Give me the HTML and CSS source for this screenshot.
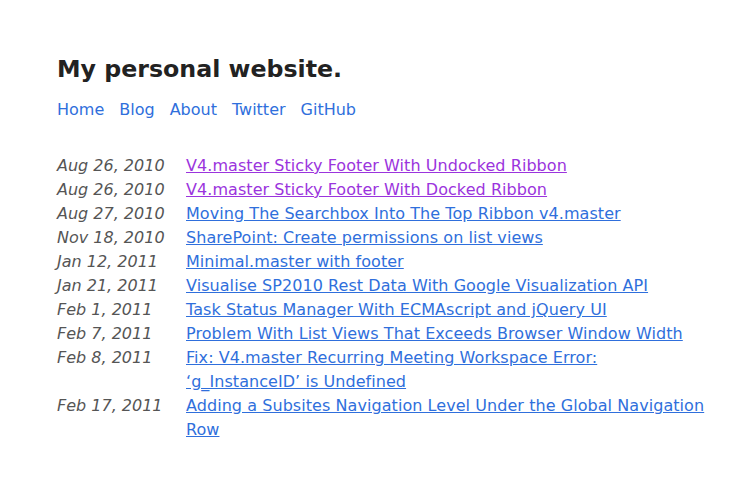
FILE: index.html
```html
<!DOCTYPE html>
<html lang="en">
<head>
<meta charset="utf-8">
<title>My personal website.</title>
<link rel="stylesheet" href="styles.css">
</head>
<body>
<div class="page">
  <header class="header">
    <h1 class="title">My personal website.</h1>
    <nav class="nav">
      <a href="#">Home</a>
      <a href="#">Blog</a>
      <a href="#">About</a>
      <a href="#">Twitter</a>
      <a href="#">GitHub</a>
    </nav>
  </header>
  <ul class="posts">
    <li class="post"><span class="date">Aug 26, 2010</span><a class="link visited" href="#">V4.master Sticky Footer With Undocked Ribbon</a></li>
    <li class="post"><span class="date">Aug 26, 2010</span><a class="link visited" href="#">V4.master Sticky Footer With Docked Ribbon</a></li>
    <li class="post"><span class="date">Aug 27, 2010</span><a class="link" href="#">Moving The Searchbox Into The Top Ribbon v4.master</a></li>
    <li class="post"><span class="date">Nov 18, 2010</span><a class="link" href="#">SharePoint: Create permissions on list views</a></li>
    <li class="post"><span class="date">Jan 12, 2011</span><a class="link" href="#">Minimal.master with footer</a></li>
    <li class="post"><span class="date">Jan 21, 2011</span><a class="link" href="#">Visualise SP2010 Rest Data With Google Visualization API</a></li>
    <li class="post"><span class="date">Feb 1, 2011</span><a class="link" href="#">Task Status Manager With ECMAscript and jQuery UI</a></li>
    <li class="post"><span class="date">Feb 7, 2011</span><a class="link" href="#">Problem With List Views That Exceeds Browser Window Width</a></li>
    <li class="post"><span class="date">Feb 8, 2011</span><a class="link" href="#">Fix: V4.master Recurring Meeting Workspace Error: ‘g_InstanceID’ is Undefined</a></li>
    <li class="post"><span class="date">Feb 17, 2011</span><a class="link" href="#">Adding a Subsites Navigation Level Under the Global Navigation Row</a></li>
  </ul>
</div>
</body>
</html>
```

FILE: styles.css
```css
html, body {
  margin: 0;
  padding: 0;
  background: #fff;
}
body {
  font-family: "DejaVu Sans", Verdana, sans-serif;
  font-size: 16px;
  line-height: 24px;
  color: #222;
}
.page {
  padding: 53px 45px 40px 57px;
}
.title {
  margin: 0;
  font-size: 23.7px;
  line-height: 32px;
  font-weight: bold;
  color: #222;
}
.nav {
  display: flex;
  gap: 15px;
  margin-top: 13px;
}
.nav a {
  color: #2f6fdc;
  text-decoration: none;
}
.posts {
  list-style: none;
  margin: 32px 0 0;
  padding: 0;
}
.post {
  display: grid;
  grid-template-columns: 129px 1fr;
}
.date {
  font-style: italic;
  color: #555;
}
.link {
  color: #2f6fdc;
  text-decoration: underline;
  letter-spacing: 0.06px;
}
.link.visited {
  color: #9b34dd;
}
```
